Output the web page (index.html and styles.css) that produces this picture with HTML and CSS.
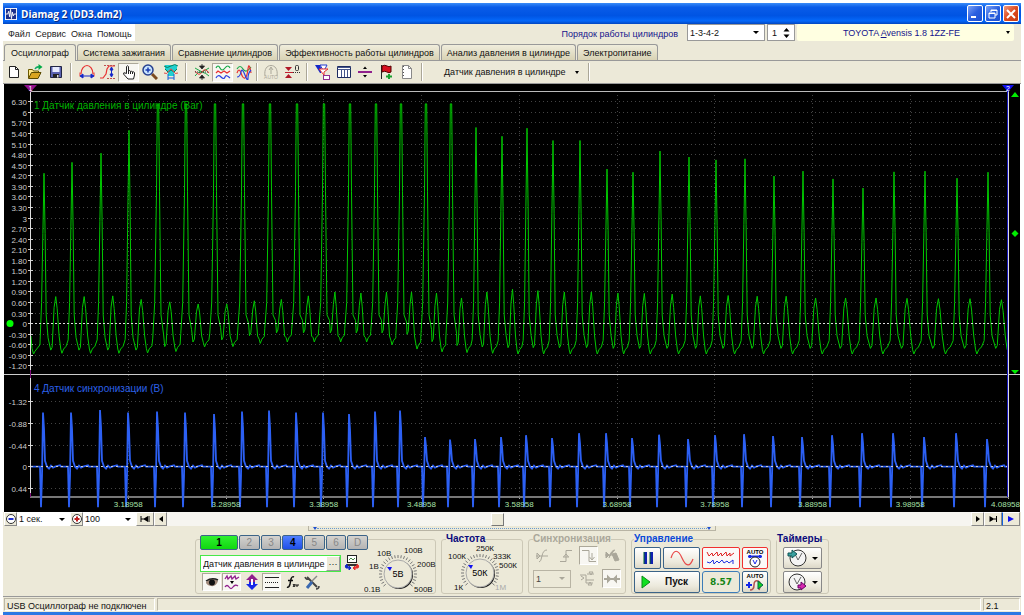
FILE: index.html
```html
<!DOCTYPE html>
<html lang="ru">
<head>
    <meta charset="UTF-8">
    <meta name="viewport" content="width=device-width, initial-scale=1.0">
    <title>Diamag 2 (DD3.dm2)</title>
    <link rel="stylesheet" href="styles.css">
</head>
<body>
    <header class="titlebar">
        <svg class="app-icon" viewBox="0 0 13 13"><rect width="13" height="13" fill="#fff"/><rect x="1" y="1" width="11" height="11" fill="#1c2f8c"/><path d="M1 6.500h2l1-3 1 6 1-8 1 10 1-7 1 4 1-2h2" fill="none" stroke="#fff"/></svg>
        <h1 class="title">Diamag 2 (DD3.dm2)</h1>
        <button class="win-btn" aria-label="Свернуть"><svg viewBox="0 0 14 14"><path d="M3 10h5" stroke="#fff" stroke-width="2"/></svg></button>
        <button class="win-btn" aria-label="Развернуть"><svg viewBox="0 0 14 14"><path d="M5 5V3h6v5H9M5 3.500h6M3 6h6v5H3zM3 6.500h6" fill="none" stroke="#fff"/></svg></button>
        <button class="win-btn close" aria-label="Закрыть"><svg viewBox="0 0 14 14"><path d="M3 3l8 8M11 3l-8 8" stroke="#fff" stroke-width="2"/></svg></button>
    </header>

    <div class="menu-row">
        <nav class="menu">
            <a href="#">Файл</a>
            <a href="#">Сервис</a>
            <a href="#">Окна</a>
            <a href="#">Помощь</a>
        </nav>
        <label class="order-label" for="order">Порядок работы цилиндров</label>
        <span class="combo order"><select id="order"><option>1-3-4-2</option></select></span>
        <span class="spinner"><input type="number" value="1" aria-label="Цилиндр"><svg viewBox="0 0 7 12"><path d="M3.500 1l3 3.500h-6zM3.500 11l3-3.500h-6z"/></svg></span>
        <button class="car"><span>TOYOTA <u>A</u>vensis 1.8 1ZZ-FE</span><i class="arrow"></i></button>
    </div>

    <nav class="tabs">
        <button class="tab active">Осциллограф</button>
        <button class="tab">Система зажигания</button>
        <button class="tab">Сравнение цилиндров</button>
        <button class="tab">Эффективность работы цилиндров</button>
        <button class="tab">Анализ давления в цилиндре</button>
        <button class="tab">Электропитание</button>
    </nav>

    <div class="toolbar">
        <button class="tool" aria-label="Новый"><svg viewBox="0 0 16 16"><path d="M3.500 2.500h6l3 3v8h-9z" fill="#fff" stroke="#222"/><path d="M9.500 2.500v3h3" fill="none" stroke="#222"/></svg></button>
        <button class="tool" aria-label="Открыть"><svg viewBox="0 0 16 16"><path d="M1.500 14V5.500h4l1 1.500h5v2" fill="#ffe98a" stroke="#6b5a00"/><path d="M1.500 14.500l3-6h9.500l-3 6z" fill="#d9a520" stroke="#5a4a00"/><path d="M8 5c1-2 2-2.500 4-2" fill="none" stroke="#1a6" stroke-width="1.500"/><path d="M11.500 0l4 3-4 3z" fill="#0a4"/></svg></button>
        <button class="tool" aria-label="Сохранить"><svg viewBox="0 0 16 16"><path d="M2.500 2.500h11v11h-11z" fill="#5a62b0" stroke="#222644"/><path d="M4.500 3h7v5h-7z" fill="#e8ecff"/><path d="M5 10h6v3.500H5z" fill="#222"/><path d="M9 11h1.500v2.500H9z" fill="#ddd"/></svg></button>
        <span class="sep"></span>
        <button class="tool" aria-label="Период"><svg viewBox="0 0 16 16"><path d="M2 10C2 5 5 1.500 8 1.500S14 5 14 10" fill="none" stroke="#e83030" stroke-width="1.200"/><path d="M1 8.500v4M15 8.500v4" stroke="#e83030"/><path d="M2 12h12M4 10l-3 2 3 2zM12 10l3 2-3 2z" fill="#1528c8" stroke="#1528c8"/></svg></button>
        <button class="tool" aria-label="Амплитуда"><svg viewBox="0 0 16 16"><path d="M0 14h3l3-4 1-5 2-3h6" fill="none" stroke="#e83030" stroke-width="1.200"/><path d="M4 1.500h12M7 14.500h8" stroke="#c05050" stroke-dasharray="2 1"/><path d="M11.500 4v8M10 6l1.500-3L13 6zM10 10l1.500 3L13 10z" fill="#1528c8" stroke="#1528c8"/></svg></button>
        <button class="tool pressed" aria-label="Рука"><svg viewBox="0 0 16 16"><path d="M5.500 9.500V2.500q1-1.500 2 0V7q1.500-1.200 2 .5 1.500-1 2 .5 1.500-.7 2 .7V11l-1 4H7L2.500 10q0-2 1.500-1z" fill="#fff" stroke="#222"/><path d="M7.500 7v3M9.500 7.500V10M11.500 8v2" stroke="#222"/></svg></button>
        <button class="tool" aria-label="Масштаб"><svg viewBox="0 0 16 16"><path d="M10 10l5 5" stroke="#7a4a20" stroke-width="3"/><circle cx="6" cy="6" r="5" fill="#c8e4ff" stroke="#27408f" stroke-width="1.500"/><path d="M3.500 6h5M6 3.500v5" stroke="#1a3bb0" stroke-width="1.500"/></svg></button>
        <button class="tool" aria-label="Окно"><svg viewBox="0 0 16 16"><path d="M2 1h12v4l-3 4v3H5V9L2 5z" fill="#20d0d0"/><path d="M1 2q3 3 7 0t7 0M2 5l3 3 3-2 3 2 3-3" fill="none" stroke="#068060"/><path d="M1 9q3 2 5-2t4 0 5 2" fill="none" stroke="#e04848"/><path d="M5 10v6M11 10v6M5 14h6" stroke="#1560d8"/></svg></button>
        <span class="sep"></span>
        <button class="tool" aria-label="Сжать"><svg viewBox="0 0 16 16"><path d="M1 4l7 4 7-4M1 12q3-5 7-4t7 4" fill="none" stroke="#18a848"/><path d="M1 7q4 6 7 1t7 1" fill="none" stroke="#e83030"/><path d="M1 8h14" stroke="#333" stroke-dasharray="1 1"/><path d="M5.500 2h5L8 5zM5.500 14h5L8 11zM8 0v3M8 13v3" fill="#222" stroke="#222" stroke-width=".8"/></svg></button>
        <button class="tool pressed" aria-label="Раздельно"><svg viewBox="0 0 16 16" fill="none" stroke-width="1.200"><path d="M1 4q2-4 4 0t5 0 5 0" stroke="#18a848"/><path d="M1 9l2-2 3 2 3-2 3 2 3-2" stroke="#e83030"/><path d="M1 14q2-4 5-1t4 0 5 1" stroke="#2840e0"/></svg></button>
        <button class="tool" aria-label="Вместе"><svg viewBox="0 0 16 16" fill="none" stroke-width="1.200"><path d="M1 5q3-5 6 0t8-2" stroke="#18a848"/><path d="M1 9q2-6 4 0t4 5 3-9 3 4" stroke="#e83030"/><path d="M1 13q3 0 4-5t4 3 3 3 3-8" stroke="#2840e0"/></svg></button>
        <span class="sep narrow"></span>
        <button class="tool" aria-label="Авто"><svg viewBox="0 0 16 16" fill="none" stroke="#aaa79a"><path d="M2 12C1 5 4 1.500 8 1.500S15 5 14 12M8 4v6M6 6l2-3 2 3"/><text x="8" y="15" font-size="5" text-anchor="middle" fill="#aaa79a" stroke="none">AUTO</text></svg></button>
        <button class="tool" aria-label="Ноль"><svg viewBox="0 0 16 16"><path d="M1 3h7L4.500 7zM1 14h7L4.500 10z" fill="#b01828"/><path d="M1 8.500h8" stroke="#c02030"/><path d="M9 8.500h7" stroke="#333" stroke-dasharray="1 1"/><rect x="11.500" y="1.500" width="3" height="5" rx="1" fill="none" stroke="#333"/></svg></button>
        <span class="sep"></span>
        <button class="tool" aria-label="Фильтр"><svg viewBox="0 0 16 16"><path d="M0 1h5l1 3v5H5z" fill="#1528c8"/><path d="M5 1h7l-2 4-2 1z" fill="#fff" stroke="#2038d0"/><path d="M4 5h9l-4 3v3z" fill="#fff" stroke="#e83030"/><rect x="8.500" y="11.500" width="6" height="4" fill="#fff" stroke="#903090"/></svg></button>
        <button class="tool" aria-label="Таблица"><svg viewBox="0 0 16 16"><path d="M1.500 2.500h13v11h-13z" fill="#fff" stroke="#1c2a60"/><path d="M1.500 3.500h13M1.500 5.500h13M5.500 5v8M8.500 5v8M11.500 5v8" stroke="#44558c"/></svg></button>
        <button class="tool" aria-label="Линейка"><svg viewBox="0 0 16 16"><path d="M1 8h14" stroke="#90208c" stroke-width="2"/><path d="M6 5h4L8 2.500zM6 11h4l-2 2.500z"/></svg></button>
        <button class="tool" aria-label="Метка"><svg viewBox="0 0 16 16"><path d="M3.500 1v14" stroke="#222"/><path d="M4 2q3-1.500 5 0t4 0v6q-2 1.500-4 0T4 8z" fill="#d81020" stroke="#500"/><path d="M8 12.500h6M11 10v5" stroke="#18a030" stroke-width="2"/></svg></button>
        <button class="tool" aria-label="Отчет"><svg viewBox="0 0 16 16"><path d="M3.500 1.500h6l3 3v10h-9z" fill="#fff" stroke="#888"/><path d="M9.500 1.500v3h3" fill="none" stroke="#888"/><path d="M4.500 2v12" stroke="#555" stroke-dasharray="1 2"/></svg></button>
        <span class="sep"></span>
        <button class="sensor-menu"><span>Датчик давления в цилиндре</span><i class="arrow"></i></button>
        <span class="sep"></span>
    </div>

    <main class="scope">
        <svg id="chart"></svg>
    </main>

    <div class="scroll-row">
        <button class="zoom-btn" aria-label="Уменьшить"><svg viewBox="0 0 12 12"><circle cx="6" cy="6" r="4.500" fill="#fff" stroke="#333"/><path d="M3.500 6h5" stroke="#2030d0" stroke-width="2"/></svg></button>
        <span class="combo plain"><select aria-label="Развертка"><option>1 сек.</option></select></span>
        <button class="zoom-btn" aria-label="Увеличить"><svg viewBox="0 0 12 12"><circle cx="6" cy="6" r="4.500" fill="#fff" stroke="#333"/><path d="M3.500 6h5M6 3.500v5" stroke="#c02020" stroke-width="2"/></svg></button>
        <span class="combo plain"><select aria-label="Масштаб, %"><option>100</option></select></span>
        <button class="nav-btn wide" aria-label="В начало"><svg viewBox="0 0 10 8"><path d="M1 1v6M9 1v6" stroke="#000"/><path d="M8 1v6L3 4zM1 3.500h3v1H1z"/></svg></button>
        <button class="nav-btn" aria-label="Назад"><svg viewBox="0 0 10 8"><path d="M7 1v6L3 4z"/></svg></button>
        <input class="track" type="range" min="0" max="100" value="41" aria-label="Положение">
        <button class="nav-btn" aria-label="Вперед"><svg viewBox="0 0 10 8"><path d="M3 1v6l4-3z"/></svg></button>
        <button class="nav-btn wide" aria-label="В конец"><svg viewBox="0 0 10 8"><path d="M1.500 1v6l5-3zM8 1h1v6H8z"/><path d="M6 4h2" stroke="#000"/></svg></button>
        <button class="nav-btn wide play" aria-label="Пуск просмотра"><svg viewBox="0 0 10 8"><path d="M2 1v6l6-3z" fill="#1010f0"/></svg></button>
    </div>

    <div class="splitter">
        <div class="grip"><i class="arrow"></i><span></span><i class="arrow"></i></div>
    </div>

    <div class="panel">
        <section class="group channels">
            <div class="left">
                <div class="channel-row">
                    <button class="ch on">1</button>
                    <button class="ch">2</button>
                    <button class="ch">3</button>
                    <button class="ch sync">4</button>
                    <button class="ch">5</button>
                    <button class="ch">6</button>
                    <button class="ch">D</button>
                </div>
                <div class="sensor-row">
                    <div class="sensor"><input type="text" value="Датчик давления в цилиндре" aria-label="Датчик"><button aria-label="Выбрать">···</button></div>
                    <svg viewBox="0 0 16 16" class="icon16"><rect x="3.500" y=".5" width="9" height="7" fill="#fff" stroke="#222"/><path d="M5 5l2-2 2 2 2-2" fill="none" stroke="#484"/><path d="M3 9h10l1 2H2z" fill="#333"/><path d="M3 9Q0 11 2 13h3M5 11l2 2-2 2z" fill="#1528c8" stroke="#1528c8"/><path d="M13 9q3 2 1 4h-3M11 11l-2 2 2 2z" fill="#e83030" stroke="#e83030"/></svg>
                </div>
                <div class="tool-row">
                    <button class="tool pressed" aria-label="Показать"><svg viewBox="0 0 16 16"><path d="M2 8q6-6 12-1-2 6-7 5T2 8z" fill="#a08878"/><circle cx="8" cy="8.500" r="3" fill="#111"/><path d="M2 7q6-4 12-1" fill="none" stroke="#222" stroke-width="1.500"/></svg></button>
                    <button class="tool pressed" aria-label="Сглаживание"><svg viewBox="0 0 16 16"><path d="M1 5l2-3 1 3 3-3 1 3 3-3 1 3 3-2M1 13q2-3 4 0t4 0 5-1" fill="none" stroke="#90208c" stroke-width="1.300"/><path d="M6 7h4L8 10z"/></svg></button>
                    <button class="tool" aria-label="Инверсия"><svg viewBox="0 0 16 16"><path d="M8 0l6 6h-3v2H5V6H2z" fill="#90208c"/><path d="M8 16l6-6h-3V8H5v2H2z" fill="#1528e8"/><path d="M8 5v6" stroke="#fff" stroke-width="2"/></svg></button>
                    <button class="tool pressed" aria-label="Линии"><svg viewBox="0 0 16 16" stroke="#222"><path d="M1 3.500h14M1 13.500h14"/><path d="M1 8.500h14" stroke-dasharray="1 1"/></svg></button>
                    <button class="tool" aria-label="Функция"><svg viewBox="0 0 16 16"><path d="M3 13q2 1 3-3l1-5q1-3 3-2M4 6.500h5" fill="none" stroke="#111" stroke-width="1.500"/><path d="M9 10l2 3M11 10l-2 3M12 10v2h2v-2" fill="none" stroke="#111"/></svg></button>
                    <button class="tool" aria-label="Настройка"><svg viewBox="0 0 16 16"><path d="M3 3l10 10" stroke="#444" stroke-width="2"/><path d="M13 2L7 8" stroke="#888" stroke-width="1.500"/><path d="M8 8l-5 6" stroke="#3a68b0" stroke-width="3"/><path d="M1 3q1 3 4 2M12 15q3 0 3-3" fill="none" stroke="#444" stroke-width="1.500"/></svg></button>
                </div>
            </div>
            <svg class="knob" id="knob-volt" viewBox="0 0 72 48"></svg>
        </section>

        <fieldset class="group">
            <legend>Частота</legend>
            <svg class="knob" id="knob-freq" viewBox="0 0 72 48"></svg>
        </fieldset>

        <fieldset class="group sync-group" disabled>
            <legend>Синхронизация</legend>
            <div class="sync-row">
                <button class="tool" aria-label="Уровень"><svg viewBox="0 0 16 16"><path d="M1 8h12M4 14q2 0 3-6t5-6M2 5v6l3-3z"/></svg></button>
                <button class="tool" aria-label="Фронт"><svg viewBox="0 0 16 16"><path d="M2 13.500h6v-11h6M5 9h6M5.500 9L8 6l2.500 3"/></svg></button>
                <button class="tool pressed" aria-label="Спад"><svg viewBox="0 0 16 16"><path d="M1 2.500h7v11h7M11 5v6M8.500 9l2.500 3 2.500-3"/></svg></button>
                <button class="tool" aria-label="Ручной"><svg viewBox="0 0 16 16"><path d="M1 7h12M2 4v6l3-3zM5 10q2-8 6-8M8 6l3 7 4-1-3-7z" fill="#aaa79a"/></svg></button>
            </div>
            <div class="sync-row">
                <span class="combo small"><select aria-label="Канал"><option>1</option></select></span>
                <button class="tool" aria-label="Задержка"><svg viewBox="0 0 16 16"><path d="M1 4h6v8h7M2 9l3-2-3-2M8 3h7M10 1h4l-2 3zM9 14h4l-2-3zM7 9h8"/></svg></button>
                <button class="tool pressed" aria-label="Центр"><svg viewBox="0 0 16 16"><path d="M0 8h16M4 6l2 2-2 2zM12 6l-2 2 2 2z" fill="#aaa79a" stroke-width="2"/></svg></button>
            </div>
        </fieldset>

        <fieldset class="group control-group">
            <legend class="blue">Управление</legend>
            <div class="control-grid">
                <button class="cmd" aria-label="Пауза"><svg viewBox="0 0 24 16"><path d="M8 2h3v12H8zM14 2h3v12h-3z" fill="#1020b0"/><path d="M8 2v12M14 2v12" stroke="#063"/></svg></button>
                <button class="cmd" aria-label="Синус"><svg viewBox="0 0 24 16"><path d="M1 8C4-1 8-1 12 8s8 9 11 1" fill="none" stroke="#e84848" stroke-width="1.200"/></svg></button>
                <button class="cmd red" aria-label="Каналы"><svg class="wave-pair" viewBox="0 0 30 16" fill="none"><path d="M1 2l2 4 3-3 1 3 4-4 1 4 3-3 1 3 4-4 1 4 3-3v3l4-3" stroke="#e02020"/><path d="M1 12l3 1 3-3 1 4 3-3 2 2 3-3 2 3 3-2 2 2 4-3v4" stroke="#2030e0"/></svg></button>
                <button class="cmd red" aria-label="Авто"><svg class="auto-icon" viewBox="0 0 20 20"><text x="10" y="6" class="auto">AUTO</text><path d="M3 8.500h14M5 7v3M15 7v3" stroke="#1528e8" stroke-width="2"/><circle cx="10" cy="14" r="5" fill="#fff" stroke="#222"/><path d="M8 12l2 4 2-4" fill="none" stroke="#1528e8"/></svg></button>
                <button class="cmd start"><svg viewBox="0 0 10 14"><path d="M1 1v12l8-6z" fill="#10e020" stroke="#0a8a18"/></svg>Пуск</button>
                <output class="rate">8.57</output>
                <button class="cmd" aria-label="Автопуск"><svg class="auto-icon" viewBox="0 0 20 20"><text x="10" y="6" class="auto">AUTO</text><path d="M5 18q4 0 4-5t4-4 1 9" fill="none" stroke="#b05050" stroke-width="1.500"/><path d="M1 13h6M4 10v6" stroke="#1528e8" stroke-width="2"/><path d="M13 9v8l5-4z" fill="#10d020" stroke="#064"/></svg></button>
            </div>
        </fieldset>

        <fieldset class="group timer-group">
            <legend>Таймеры</legend>
            <div class="timers">
                <button class="cmd" aria-label="Таймер пуска"><svg viewBox="0 0 20 18"><circle cx="11" cy="9" r="8" fill="#f4f4f4" stroke="#333"/><path d="M11 11l4-7M11 11L8 5" stroke="#666"/><path d="M1 4h4V1l5 4-5 4V7H1z" fill="#3aa0a0" stroke="#155"/></svg><i class="arrow"></i></button>
                <button class="cmd" aria-label="Таймер остановки"><svg viewBox="0 0 20 18"><circle cx="10" cy="9" r="8" fill="#f4f4f4" stroke="#333"/><path d="M10 11l4-7M10 11L7 5" stroke="#666"/><path d="M11 12h3V9l5 4-5 4v-2h-3z" fill="#d828b0" stroke="#606"/></svg><i class="arrow"></i></button>
            </div>
        </fieldset>
    </div>

    <footer class="status">
        <span class="state">USB Осциллограф не подключен</span>
        <span class="rest"></span>
        <span class="version">2.1</span>
    </footer>
    <script src="chart.js"></script>
</body>
</html>
```
FILE: styles.css
```css
* {
    box-sizing: border-box;
}
body {
    margin: 0;
    padding: 3px 3px 0;
    min-height: 100vh;
    display: flex;
    flex-direction: column;
    background: #fff;
    color: #111;
    font-family: "Liberation Sans", Arial, sans-serif;
    font-size: 9px;
    line-height: 12px;
}
button, input, select, output {
    font: inherit;
    color: inherit;
    margin: 0;
    padding: 0;
}
button {
    background: none;
    border: 0;
}
svg {
    display: block;
}
body > * {
    background: #ece9d8;
    flex: none;
}

/* title */
.titlebar {
    height: 21px;
    display: flex;
    align-items: center;
    gap: 2px;
    padding: 0 2px;
    background: linear-gradient(#3a8cf8, #0a5ce8 20%, #0054e3 60%, #0468fa 85%, #0246c0);
}
.app-icon {
    width: 12px;
    height: 12px;
}
.title {
    flex: 1;
    margin: 0 0 0 2px;
    font: bold 10px/16px "Open Sans", sans-serif;
    color: #fff;
    text-shadow: 1px 1px #0a2a80;
}
.win-btn {
    width: 16px;
    height: 17px;
    border: 1px solid #fff;
    border-radius: 2px;
    background: linear-gradient(135deg, #7da2f5, #2a5fe0 50%, #1c50d0);
}
.win-btn.close {
    background: linear-gradient(135deg, #f09a80, #dd4a20 50%, #c83a10);
}

/* menu */
.menu-row {
    height: 20px;
    display: flex;
    align-items: flex-start;
    padding-right: 7px;
}
.menu {
    display: flex;
    gap: 5px;
    width: 132px;
    height: 17px;
    padding: 4px 5px;
    background: #fff;
}
.menu a {
    color: #222;
    text-decoration: none;
}
.order-label {
    margin-left: auto;
    margin-right: 9px;
    padding-top: 4px;
    color: #14148c;
}
.combo {
    position: relative;
    display: block;
    height: 17px;
    border: 1px solid #999;
    background: #fff;
}
.combo select {
    width: 100%;
    height: 100%;
    padding-left: 2px;
    border: 0;
    background: none;
    appearance: none;
}
.combo::after {
    content: "";
    position: absolute;
    right: 5px;
    top: 6px;
    border: 3px solid transparent;
    border-top-color: #000;
    border-bottom: 0;
    pointer-events: none;
}
.order {
    width: 78px;
}
.spinner {
    display: flex;
    align-items: center;
    justify-content: space-between;
    width: 28px;
    height: 17px;
    margin: 0 2px;
    padding: 0 4px;
    border: 1px solid #999;
    background: #fff;
}
.spinner input {
    width: 8px;
    border: 0;
    appearance: textfield;
}
.spinner input::-webkit-inner-spin-button {
    display: none;
}
.spinner svg {
    width: 7px;
    height: 12px;
}
.car {
    display: flex;
    align-items: center;
    width: 217px;
    height: 17px;
    padding-right: 4px;
    background: #ffffe1;
    border-radius: 2px;
    color: #14148c;
}
.car span {
    flex: 1;
}
.arrow {
    border: 2px solid transparent;
    border-top: 3px solid #000;
    border-bottom: 0;
}

/* tabs */
.tabs {
    display: flex;
    align-items: flex-end;
    gap: 1px;
    height: 17px;
    padding-left: 1px;
    border-bottom: 1px solid #999;
}
.tab {
    height: 16px;
    padding: 1px 5px 0;
    border: 1px solid #999;
    border-bottom: 0;
    border-radius: 3px 3px 0 0;
    background: linear-gradient(#f0eddc, #d8d2b4);
}
.tab.active {
    height: 17px;
    padding: 0 6px;
    margin-bottom: -1px;
    background: #ece9d8;
}

/* toolbar */
.toolbar {
    display: flex;
    align-items: center;
    height: 23px;
    border-bottom: 1px solid #999;
}
.tool {
    flex: none;
    display: grid;
    place-items: center;
    width: 21px;
    height: 19px;
}
.tool svg, .icon16 {
    width: 16px;
    height: 16px;
}
.pressed {
    background: #f8f7f2;
    border: 1px solid #aca899;
    border-right-color: #fff;
    border-bottom-color: #fff;
}
.sep {
    width: 2px;
    height: 18px;
    margin: 0 4px;
    border-left: 1px solid #aaa697;
    border-right: 1px solid #fff;
}
.sep.narrow {
    margin: 0 2px;
}
.sensor-menu {
    display: flex;
    align-items: center;
    justify-content: space-between;
    width: 157px;
    padding: 0 5px 0 17px;
}

/* scope */
.scope {
    flex: 1 0 300px;
    display: flex;
    margin: 0 1px;
    background: #000;
}
#chart {
    flex: 1;
    min-width: 0;
    font-size: 8px;
}

/* scroll row */
.scroll-row {
    display: flex;
    height: 14px;
    padding: 0 1px;
}
.combo.plain {
    width: 53px;
    height: 14px;
    border: 0;
}
.combo.plain::after {
    top: 6px;
}
.zoom-btn, .nav-btn {
    display: grid;
    place-items: center;
    width: 13px;
    height: 14px;
    background: #ece9d8;
    border: 1px solid #fff;
    border-right-color: #888;
    border-bottom-color: #888;
}
.nav-btn.wide {
    width: 18px;
}
.nav-btn.play {
    border-left: 1px solid #1060e0;
}
.zoom-btn svg {
    width: 12px;
    height: 12px;
}
.nav-btn svg {
    width: 10px;
    height: 8px;
}
.track {
    flex: 1;
    min-width: 0;
    appearance: none;
    background: #f6f5f0;
}
.track::-webkit-slider-thumb {
    appearance: none;
    width: 13px;
    height: 13px;
    background: #ece9d8;
    border: 1px solid #fff;
    border-right-color: #777;
    border-bottom-color: #777;
}

/* splitter */
.splitter {
    display: flex;
    justify-content: center;
}
.grip {
    display: flex;
    align-items: center;
    width: 40%;
    height: 5px;
    padding: 0 4px;
    border: 1px solid #b8b4a4;
    border-top: 0;
}
.grip span {
    flex: 1;
    border-top: 1px dotted #6a9ad0;
}
.grip .arrow {
    border-top-color: #2050d0;
}

/* bottom panel */
.panel {
    display: flex;
    justify-content: center;
    align-items: stretch;
    gap: 5px;
    height: 66px;
    padding: 3px 0 2px;
    border-bottom: 1px solid #999;
}
.group {
    min-width: 0;
    margin: 0;
    padding: 0 4px;
    border: 1px solid #ccc8b6;
    border-radius: 3px;
}
legend {
    padding: 0;
    height: 10px;
    font-size: 10px;
    line-height: 10px;
    font-weight: bold;
    color: #0a0a7c;
}
legend.blue {
    color: #0a4ad8;
}
.sync-group legend {
    color: #aaa79a;
}
.channels {
    display: flex;
    width: 241px;
    margin-top: 5px;
    padding: 0 1px 0 4px;
}
.left {
    width: 164px;
    margin-top: -5px;
}
.channel-row {
    display: flex;
    gap: 1px;
    width: 168px;
}
.ch {
    flex: 1;
    height: 15px;
    border: 1px solid #3c6488;
    border-radius: 2px;
    background: linear-gradient(#d4d2ce, #b4b4b4);
    color: #888;
    font-size: 10px;
}
.ch.on {
    flex: none;
    width: 38px;
    background: linear-gradient(#30f030, #10d810);
    color: #000;
    font-weight: bold;
}
.ch.sync {
    background: linear-gradient(#5080ff, #2050e8);
    color: #000;
    font-weight: bold;
}
.sensor-row {
    display: flex;
    gap: 3px;
    margin-top: 5px;
}
.sensor {
    display: flex;
    flex: none;
    width: 141px;
    height: 17px;
    border: 1px solid #48e848;
    background: #fff;
}
.sensor input {
    flex: 1;
    min-width: 0;
    padding-left: 2px;
    border: 0;
    background: none;
}
.sensor button {
    width: 14px;
    background: #ece9d8;
    border: 1px solid #fff;
    border-right-color: #999;
    border-bottom-color: #999;
    line-height: 8px;
}
.icon16 {
    flex: none;
}
.tool-row {
    display: flex;
    margin-top: 1px;
    padding-left: 2px;
    gap: 1px;
}
.tool-row .tool {
    width: 19px;
    height: 18px;
}
.knob {
    flex: none;
    width: 72px;
    height: 48px;
    font-size: 8px;
}
.channels .knob {
    margin-top: 5px;
}
.sync-group {
    width: 98px;
}
.sync-row {
    display: flex;
    justify-content: space-between;
    align-items: center;
    height: 23px;
}
.sync-row .tool {
    width: 19px;
}
.sync-row svg {
    fill: none;
    stroke: #aaa79a;
}
.combo.small {
    width: 38px;
    height: 18px;
    background: none;
    border-color: #b8b4a4;
}
.combo.small select {
    color: #444;
    opacity: 1;
}
.combo.small::after {
    border-top-color: #aaa79a;
}
.control-group {
    padding: 0 2px;
}
.control-grid {
    display: grid;
    grid-template: 22px 22px / 27px 37px 38px 26px;
    gap: 2px;
    padding-top: 3px;
}
.cmd {
    display: flex;
    align-items: center;
    justify-content: center;
    border: 1px solid #3c6488;
    border-radius: 2px;
    background: linear-gradient(#fff, #ece9dc 70%, #dcd8c8);
}
.cmd svg {
    width: 24px;
    height: 16px;
}
.cmd .wave-pair {
    width: 30px;
}
.cmd .auto-icon {
    width: 20px;
    height: 20px;
}
.auto {
    font-size: 6px;
    font-weight: bold;
    text-anchor: middle;
}
.cmd.red {
    border-color: #f03030;
    background: #fbf8f8;
}
.cmd.start {
    grid-column: span 2;
    justify-content: flex-start;
    gap: 14px;
    padding-left: 6px;
    font-size: 10px;
    font-weight: bold;
}
.cmd.start svg {
    width: 10px;
    height: 14px;
}
.rate {
    display: grid;
    place-items: center;
    border: 1px solid #3c7cb8;
    border-radius: 3px;
    color: #148414;
    font: bold 9px/12px "DejaVu Sans", sans-serif;
}
.timer-group {
    padding: 0 6px;
}
.timer-group legend {
    margin: 0 -6px;
}
.timers {
    display: grid;
    grid-template: 22px 22px / 39px;
    gap: 2px;
    padding-top: 3px;
}
.timers .cmd {
    gap: 5px;
    border-color: #888;
}
.timers svg {
    width: 20px;
    height: 18px;
}
.timers .arrow {
    border-width: 3px 3px 0;
}

/* status bar */
.status {
    display: flex;
    gap: 2px;
    height: 18px;
    padding: 1px;
    border-bottom: 3px solid #2c78e4;
}
.status span {
    padding: 1px 2px;
    border: 1px solid #bbb7a6;
    border-right-color: #fff;
    border-bottom-color: #fff;
}
.state {
    width: 151px;
}
.rest {
    flex: 1;
}
.version {
    width: 37px;
}
```
FILE: chart.js
```js
// [x, peak, second peak, valley after the peak, lowest point], x in plot pixels, the rest in bar
const cycles = [
    [44, 4.27, .77, -.75, -.84], [72, 4.58, .77, -.75, -.84], [101, 4.84, .79, -.75, -.84],
    [129, 5.49, .69, -.75, -.83], [158, 6.24, .62, -.65, -.79], [186, 6.24, .56, -.52, -.66],
    [215, 6.24, .56, -.46, -.65], [243, 6.24, .65, -.34, -.56], [270, 6.24, .69, -.26, -.52],
    [297, 6.24, .79, -.26, -.52], [324, 6.24, .9, -.26, -.52], [350, 6.24, .87, -.26, -.52],
    [376, 6.24, .9, -.26, -.6], [401, 6.24, .9, -.3, -.72], [426, 6.24, .87, -.51, -.8],
    [451, 6.24, .73, -.62, -.82], [476, 5.57, .9, -.66, -.84], [502, 5.32, .98, -.68, -.86],
    [527, 5.55, .94, -.68, -.86], [553, 5.2, .9, -.68, -.86], [580, 5.2, .9, -.68, -.86],
    [607, 4.39, .87, -.7, -.86], [633, 4.3, .86, -.7, -.86], [660, 4.9, .84, -.7, -.86],
    [689, 4.73, .79, -.7, -.86], [716, 4.65, .8, -.7, -.86], [745, 4.68, .78, -.7, -.86],
    [774, 4.19, .78, -.7, -.86], [803, 4.33, .73, -.7, -.86], [833, 4.11, .73, -.7, -.86],
    [863, 3.85, .73, -.7, -.86], [894, 4.31, .72, -.7, -.86], [925, 4.33, .71, -.7, -.86],
    [957, 4.13, .71, -.7, -.86], [988, 4.3, .68, -.7, -.86], [1020, 4.3, .68, -.7, -.86]
];
// heights of the sync pulses, in volts
const pulses = [
    1.1, 1.1, 1.15, 1.1, 1.12, 1.1, 1.07, 1.12, 1.14, 1.1, 1.1, 1.07, 1.12, 1.14,
    .6, .55, .56, .6, .64, .58, .68, .68, .58, .65,
    .56, .64, .66, .62, .6, .64, .68, .68, .6, .68, .56
];

const chart = document.getElementById('chart');

function draw() {
    const W = chart.clientWidth, H = chart.clientHeight;
    const X = x => (x - 4) * W / 1016;
    const Y = y => (y - 84) * H / 428;
    const px = v => Math.round(v) + .5;
    const bar = v => 323.7 - v * 35.23;
    const volt = v => 466.7 - v * 49.3;
    const line = (x1, y1, x2, y2, c, extra = '') =>
        `<path d="M${X(x1)} ${Y(y1)}L${X(x2)} ${Y(y2)}" stroke="${c}" ${extra}/>`;
    const text = (x, y, s, c, anchor = 'end', size = 8) =>
        `<text x="${X(x)}" y="${Y(y)}" fill="${c}" text-anchor="${anchor}" font-size="${size}">${s}</text>`;
    const poly = (pts, c) => `<polygon points="${pts.map(p => X(p[0]) + ',' + Y(p[1])).join(' ')}" fill="${c}"/>`;
    const dots = 'stroke-dasharray="1 3"';
    let s = '';

    // grid
    for (let i = 0; i < 26; i++) {
        const v = 6.3 - i * .3, y = px(bar(v) - .5);
        const label = Math.abs(v % 3) < .01 || Math.abs(v % 3) > 2.99 ? Math.round(v) : v.toFixed(2);
        if (i !== 21) s += line(31, y, 1007, y, '#444', dots);
        s += line(28, y, 33, y, '#ccc') + text(27, y + 3, label, '#ccc');
    }
    for (const v of [1.32, .88, .44, 0, -.44]) {
        const y = px(volt(v) - .5);
        if (v) s += line(31, y, 1007, y, '#444', dots);
        s += line(28, y, 33, y, '#ccc') + text(27, y + 3, v ? (-v).toFixed(2) : '0', '#ccc');
    }
    for (let i = 1; i <= 10; i++) {
        const x = px(30.5 + i * 97.75 - .5);
        if (i < 10) s += line(x, 95, x, 496, '#444', dots);
        s += line(x, 496, x, 499, '#aaa');
    }

    // cylinder pressure
    let pts = [[31, -.35], [32, -.7], [33.500, -.86], [35, -.78], [40, -.6]];
    cycles.forEach(([x, p, h, valley, low], i) => {
        const w = p > 6 ? 1.5 : 1.1;
        pts.push([x - 3.500 * w, low + .38], [x - 2.200 * w, .6], [x - w, p * .6]);
        if (p > 6) pts.push([x - .7, p], [x + .7, p]);
        else pts.push([x, p]);
        pts.push([x + w, p * .6], [x + 2 * w, .25], [x + 3.700 * w, valley + .35]);
        if (!cycles[i + 1]) return;
        const t = cycles[i + 1][0] - x;
        pts.push([x + .24 * t, valley], [x + .29 * t, valley + .08], [x + .36 * t, h * .6], [x + .42 * t, h],
            [x + .47 * t, h * .55], [x + .54 * t, -.35], [x + .6 * t, low + .12], [x + .64 * t, low],
            [x + .7 * t, low + .12], [x + .79 * t, low + .2]);
    });
    pts = pts.filter(p => p[0] < 1008);
    s += `<polyline points="${pts.map(p => X(p[0]) + ',' + Y(bar(p[1]))).join(' ')}" fill="none" stroke="#00c800"/>`;

    // axes
    s += line(30, 91.5, 1009, 91.5, '#bbb');
    s += line(4, 374.5, 1020, 374.5, '#ccc');
    s += line(30, 497, 1009, 497, '#777', 'stroke-width="2"');

    // sync pulses
    pts = [[31, 0]];
    pulses.forEach((v, i) => {
        const x = cycles[i][0] - 1;
        pts.push([x - 3, 0], [x - 2, -.82], [x - 1, -.2], [x, v], [x + 1, v * .7], [x + 2, .12], [x + 4, 0],
            [x + 6, -.04], [x + 8, .02], [x + 10, -.02], [x + 12, 0], [x + 17, .03], [x + 18, 0]);
    });
    pts.push([1007, 0]);
    s += `<polyline points="${pts.map(p => X(p[0]) + ',' + Y(volt(p[1]))).join(' ')}" fill="none" stroke="#2c60f4" stroke-width="1.800"/>`;

    // zero lines, left axis and right cursor
    s += line(31, 323.5, 1007, 323.5, '#ddd', 'stroke-dasharray="2 2"');
    s += line(31, 466.5, 1007, 466.5, '#ccc', 'stroke-dasharray="2 3"');
    s += line(30.5, 91, 30.5, 497, '#ddd') + line(30.5, 370, 30.5, 378, '#80107c') + line(30.5, 493, 30.5, 497, '#80107c');
    s += line(1007.5, 91, 1007.5, 497, '#1818c0') + line(1008.5, 91, 1008.5, 497, '#ddd');

    for (let i = 1; i <= 10; i++) {
        const x = 30.5 + i * 97.75;
        s += text(i < 10 ? x : 1020, 507, (3.08958 + i / 10).toFixed(5), '#a8e0a8', i < 10 ? 'middle' : 'end');
    }

    // cursors and level markers
    s += poly([[24, 85], [37, 85], [30.5, 92]], '#90108c') + text(30.5, 91, '1', '#fff', 'middle', 7);
    s += poly([[1002, 85], [1014, 85], [1008, 92]], '#1010f0') + text(1008, 91, '2', '#fff', 'middle', 7);
    s += poly([[1011, 97], [1019, 97], [1015, 92]], '#0e0') + poly([[1011, 370], [1019, 370], [1015, 374]], '#0e0');
    s += poly([[1015, 230], [1018.5, 233.5], [1015, 237], [1011.5, 233.5]], '#0e0');
    s += `<circle cx="${X(10)}" cy="${Y(323.5)}" r="3.500" fill="#0f0"/>`;
    s += text(34, 109, '1 Датчик давления в цилиндре (Bar)', '#00b400', 'start', 10);
    s += text(34, 392, '4 Датчик синхронизации (В)', '#2c60e8', 'start', 10);
    chart.innerHTML = s;
}

// labels: [x, y, text, colour]
function knob(id, cx, value, labels, marker) {
    let s = '';
    for (let a = 140; a <= 400; a += 10) {
        const r = a * Math.PI / 180, c = Math.cos(r), n = Math.sin(r);
        s += `<path d="M${cx + 16 * c} ${29 + 16 * n}L${cx + 19 * c} ${29 + 19 * n}" stroke="#777"/>`;
    }
    s += `<circle cx="${cx + 1}" cy="30" r="14" fill="#222"/><circle cx="${cx}" cy="29" r="14" fill="#ece9d8" stroke="#aaa"/>`;
    s += `<path d="M${marker[0] - 2} ${marker[1] - 2}h5l-2 4z" fill="#1010f0"/>`;
    s += `<text x="${cx}" y="32" font-size="9" text-anchor="middle">${value}</text>`;
    for (const [x, y, t, c] of labels) s += `<text x="${x}" y="${y}" fill="${c || '#111'}">${t}</text>`;
    document.getElementById(id).innerHTML = s;
}

knob('knob-volt', 34, '5В', [[13, 11, '10В'], [40, 8, '100В'], [53, 22, '200В'], [50, 47, '500В'], [0, 47, '0.1В'], [5, 24, '1В']], [25, 24]);
knob('knob-freq', 34, '50К', [[30, 7, '250К'], [2, 15, '100К'], [47, 15, '333К'], [53, 24, '500К'], [8, 46, '1К'], [49, 46, '1М', '#aaa']], [24, 23]);

draw();
window.addEventListener('resize', draw);
```
